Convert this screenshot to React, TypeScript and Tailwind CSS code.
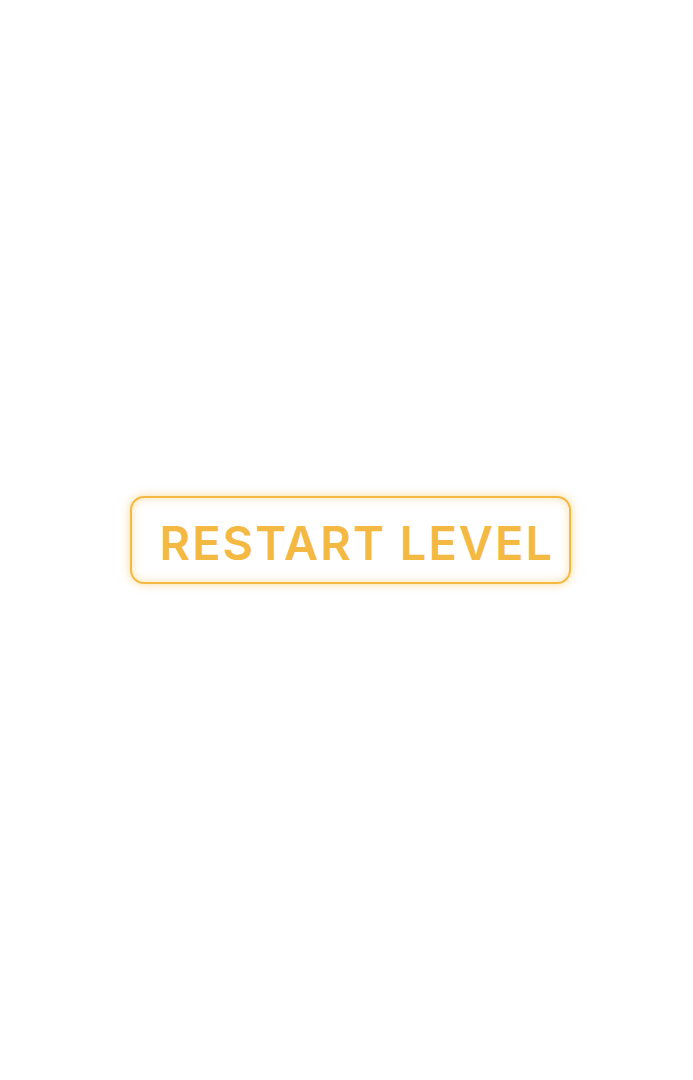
const App = () => {
  return (
    <div className="h-screen w-full bg-white flex items-center justify-center pl-[7px]">
      {/* restart button */}
      <button
        className="w-[441px] h-[88px] rounded-[14px] border-2 border-[#f4b942] bg-white flex items-center pl-[28px] pt-[4px] shadow-[0_0_10px_rgba(244,185,66,0.55),inset_0_0_8px_rgba(244,185,66,0.45)]"
      >
        <span
          className="text-[47px] leading-none font-semibold tracking-[2px] text-[#f4b942] whitespace-nowrap"
          style={{ fontFamily: "Inter, 'Noto Sans', sans-serif" }}
        >
          RESTART LEVEL
        </span>
      </button>
    </div>
  );
};

export default App;
